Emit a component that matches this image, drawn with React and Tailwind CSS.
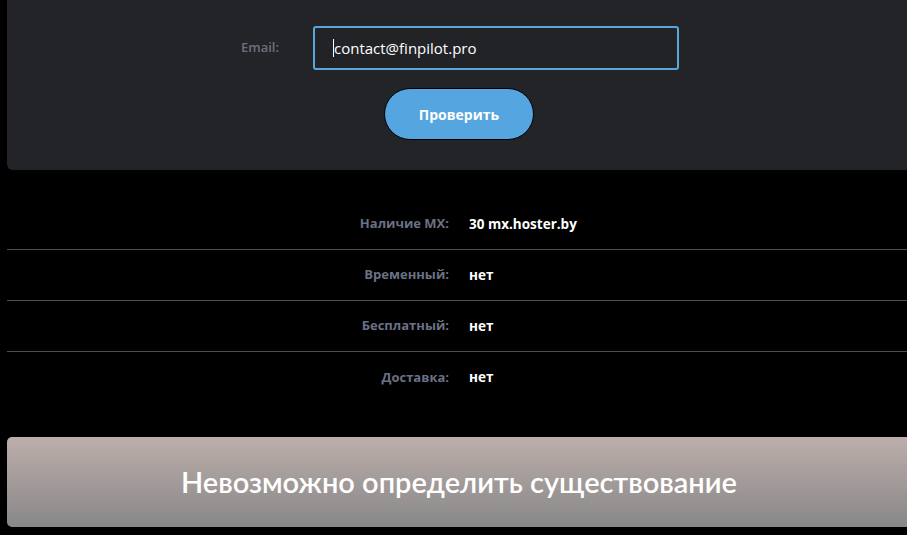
import React from "react";

const rows = [
  { label: "Наличие MX:", value: "30 mx.hoster.by" },
  { label: "Временный:", value: "нет" },
  { label: "Бесплатный:", value: "нет" },
  { label: "Доставка:", value: "нет" },
];

export default function App() {
  return (
    <div className="min-h-[535px] w-full overflow-hidden bg-black font-['Open_Sans',sans-serif]">
      <div className="ml-[7px] w-[904px]">
        {/* Form card */}
        <div className="h-[170px] rounded-b-[6px] bg-[#232428] pt-[26px]">
          <div className="flex items-center justify-center gap-[34px] pl-[2px]">
            <span className="text-[13px] font-semibold text-[#6b7080]">Email:</span>
            <div className="flex h-[44px] w-[366px] items-center rounded-[3px] border-2 border-[#5aa5d9] bg-[#222327] pl-[18px]">
              <span className="h-[18px] w-px bg-white"></span>
              <span className="text-[15px] text-white">contact@finpilot.pro</span>
            </div>
          </div>
          <div className="mt-[18px] flex justify-center">
            <button className="h-[52px] w-[150px] rounded-full border border-black bg-[#55a5e0] text-[14px] font-bold text-white">
              Проверить
            </button>
          </div>
        </div>

        {/* Results */}
        <div className="mt-[29px]">
          {rows.map((row, i) => (
            <div
              key={row.label}
              className={`grid h-[51px] grid-cols-2 items-center gap-x-[20px] ${i < rows.length - 1 ? "border-b border-[#4a4d58]" : ""}`}
            >
              <span className="text-right text-[13px] font-bold text-[#6b7185]">{row.label}</span>
              <span className="text-[13.5px] font-bold text-white">{row.value}</span>
            </div>
          ))}
        </div>

        {/* Status banner */}
        <div className="mt-[34px] flex h-[90px] items-center justify-center rounded-[5px] bg-gradient-to-b from-[#bcaeab] to-[#888888]">
          <span className="font-['Lato',sans-serif] text-[29px] font-semibold text-white">
            Невозможно определить существование
          </span>
        </div>
      </div>
    </div>
  );
}
